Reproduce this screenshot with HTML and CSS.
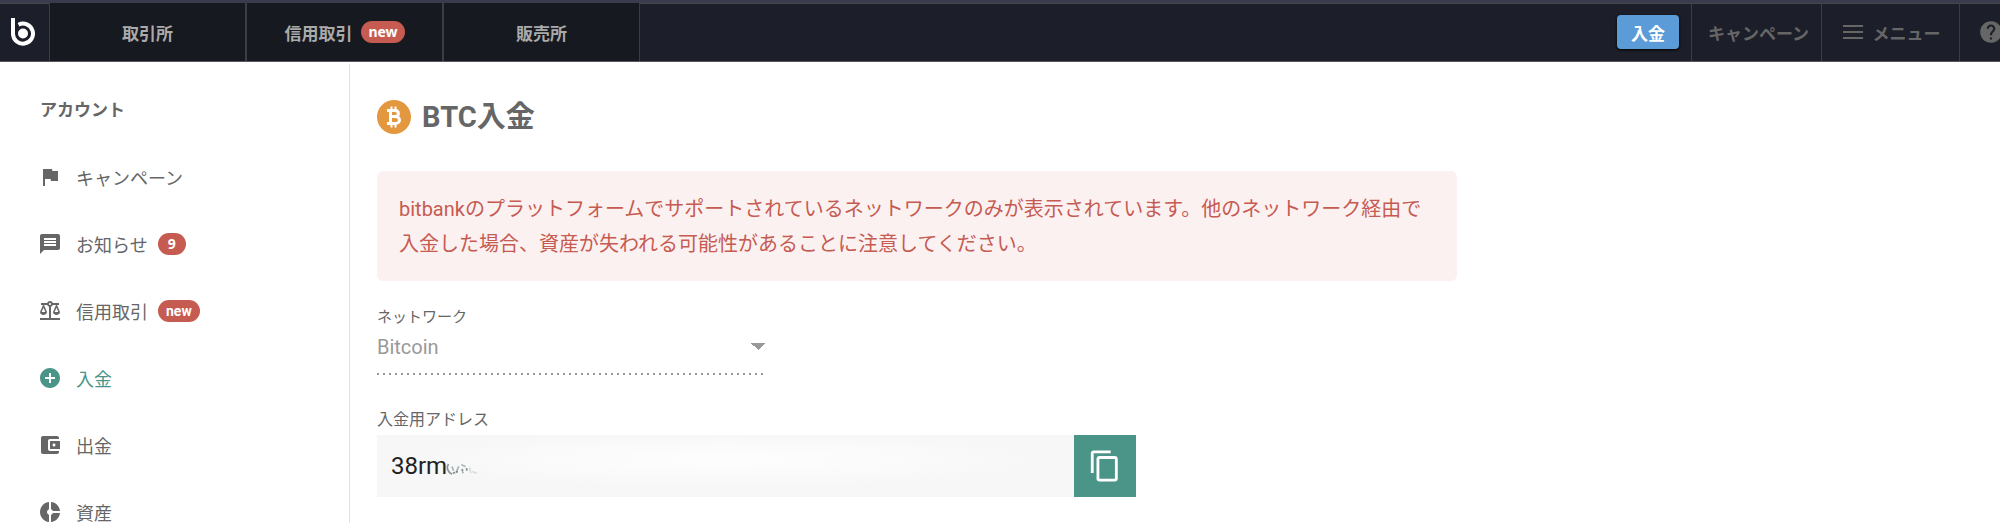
FILE: index.html
```html
<!DOCTYPE html>
<html lang="ja">

<head>
    <meta charset="UTF-8">
    <meta name="viewport" content="width=device-width, initial-scale=1.0">
    <title>BTC入金</title>
    <link rel="stylesheet" href="styles.css">
</head>

<body>
    <header class="topbar">
        <a href="#" class="logo" aria-label="bitbank">
            <svg width="26" height="32" viewBox="0 0 26 32">
                <path d="M3 2V17.500A10 10 0 1 0 8.500 8.700" fill="none" stroke="#fff" stroke-width="4"/>
                <circle cx="13" cy="17.500" r="5" fill="#fff"/>
            </svg>
        </a>
        <nav class="tabs">
            <a href="#" class="tab">取引所</a>
            <a href="#" class="tab">信用取引 <span class="badge">new</span></a>
            <a href="#" class="tab">販売所</a>
        </nav>
        <div class="tools">
            <div class="deposit"><button type="button" class="deposit-btn">入金</button></div>
            <a href="#" class="tool campaign">キャンペーン</a>
            <button type="button" class="tool menu">
                <svg width="20" height="14" viewBox="0 0 20 14" fill="#666"><path d="M0 0h20v2H0zM0 6h20v2H0zM0 12h20v2H0z"/></svg>
                メニュー
            </button>
            <a href="#" class="tool help" aria-label="ヘルプ">
                <svg width="26" height="26" viewBox="0 0 24 24" fill="#666"><path d="M12 2C6.480 2 2 6.480 2 12s4.480 10 10 10 10-4.480 10-10S17.520 2 12 2zm1 17h-2v-2h2v2zm2.070-7.750l-.9.920C13.450 12.900 13 13.500 13 15h-2v-.5c0-1.100.450-2.100 1.170-2.830l1.240-1.260c.370-.360.590-.860.590-1.410 0-1.100-.9-2-2-2s-2 .9-2 2H8c0-2.210 1.790-4 4-4s4 1.790 4 4c0 .880-.360 1.680-.930 2.250z"/></svg>
            </a>
        </div>
    </header>

    <div class="page">
        <aside class="sidebar">
            <h2>アカウント</h2>
            <ul>
                <li><a href="#">
                    <svg class="icon" viewBox="0 0 24 24"><path d="M14.400 6L14 4H5v17h2v-7h5.600l.4 2h7V6z"/></svg>
                    キャンペーン
                </a></li>
                <li><a href="#">
                    <svg class="icon" viewBox="0 0 24 24"><path d="M20 2H4c-1.100 0-1.990.9-1.990 2L2 22l4-4h14c1.100 0 2-.9 2-2V4c0-1.100-.9-2-2-2zm-2 12H6v-2h12v2zm0-3H6V9h12v2zm0-3H6V6h12v2z"/></svg>
                    お知らせ <span class="badge count">9</span>
                </a></li>
                <li><a href="#">
                    <svg class="icon" viewBox="0 0 24 24"><path d="M13 7.830c.850-.3 1.530-.980 1.830-1.830H18l-3 7c0 1.660 1.570 3 3.500 3s3.500-1.340 3.500-3l-3-7h2V4h-6.170c-.410-1.170-1.520-2-2.830-2s-2.420.830-2.830 2H3v2h2l-3 7c0 1.660 1.570 3 3.500 3S9 14.660 9 13L6 6h3.170c.3.850.980 1.530 1.830 1.830V19H2v2h20v-2h-9V7.830zM20.370 13h-3.740l1.870-4.360L20.370 13zm-13 0H3.630L5.500 8.640 7.370 13zM12 6c-.550 0-1-.450-1-1s.450-1 1-1 1 .450 1 1-.450 1-1 1z"/></svg>
                    信用取引 <span class="badge">new</span>
                </a></li>
                <li><a href="#" class="active">
                    <svg class="icon" viewBox="0 0 24 24"><path d="M12 2C6.480 2 2 6.480 2 12s4.480 10 10 10 10-4.480 10-10S17.520 2 12 2zm5 11h-4v4h-2v-4H7v-2h4V7h2v4h4v2z"/></svg>
                    入金
                </a></li>
                <li><a href="#">
                    <svg class="icon" viewBox="0 0 24 24"><path d="M21 18v1c0 1.100-.9 2-2 2H5c-1.110 0-2-.9-2-2V5c0-1.100.890-2 2-2h14c1.100 0 2 .9 2 2v1h-9c-1.110 0-2 .9-2 2v8c0 1.100.890 2 2 2h9zm-9-2h10V8H12v8zm4-2.500c-.830 0-1.500-.670-1.500-1.500s.670-1.500 1.500-1.500 1.500.670 1.500 1.500-.670 1.500-1.500 1.500z"/></svg>
                    出金
                </a></li>
                <li><a href="#">
                    <svg class="icon" viewBox="0 0 24 24"><path d="M11 9.160V2c-5 .5-9 4.790-9 10s4 9.500 9 10v-7.160c-1-.410-2-1.520-2-2.840s1-2.430 2-2.840zM14.860 11H22c-.480-4.750-4-8.530-9-9v7.160c1 .3 1.520.980 1.860 1.840zM13 14.840V22c5-.470 8.520-4.250 9-9h-7.140c-.340.860-.860 1.540-1.860 1.840z"/></svg>
                    資産
                </a></li>
            </ul>
        </aside>

        <main class="content">
            <h1>
                <svg width="34" height="34" viewBox="0 0 34 34">
                    <circle cx="17" cy="17" r="17" fill="#e3973e"/>
                    <path d="M10 10.500H18C22.500 10.500 22.500 16.500 18 16.500H14M18 16.500C24 16.500 24 23.500 18 23.500H10M13.500 10V24" fill="none" stroke="#fff" stroke-width="3"/>
                    <path d="M14.500 6.500V10M18.500 6.500V10M14.500 24V27.500M18.500 24V27.500" fill="none" stroke="#fff" stroke-width="2"/>
                </svg>
                BTC入金
            </h1>

            <p class="alert">bitbankのプラットフォームでサポートされているネットワークのみが表示されています。他のネットワーク経由で入金した場合、資産が失われる可能性があることに注意してください。</p>

            <div class="field network">
                <label for="network">ネットワーク</label>
                <select id="network" disabled>
                    <option>Bitcoin</option>
                </select>
            </div>

            <div class="field address">
                <label for="address">入金用アドレス</label>
                <div class="address-row">
                    <input type="text" id="address" value="38rm" readonly>
                    <!-- rest of the address is wiped out -->
                    <svg class="smudge" width="34" height="18" viewBox="0 0 40 18" fill="none">
                        <path d="M3 3C0 7 2 13 7 15" stroke="#8f9799" stroke-width="2"/>
                        <path d="M7 6L9 11M12 13L15 6M18 4L23 6" stroke="#aab5b8" stroke-width="2"/>
                        <path d="M8 14L14 12M19 9L20 14M24 8L25 12" stroke="#7f8a8d" stroke-width="2" stroke-dasharray="3 1"/>
                        <path d="M28 7L29 14M31 12L36 14" stroke="#d3dcde" stroke-width="2"/>
                    </svg>
                    <button type="button" class="copy-btn" aria-label="コピー">
                        <svg width="34" height="34" viewBox="0 0 24 24" fill="#fff"><path d="M16 1H4c-1.100 0-2 .9-2 2v14h2V3h12V1zm3 4H8c-1.100 0-2 .9-2 2v14c0 1.100.9 2 2 2h11c1.100 0 2-.9 2-2V7c0-1.100-.9-2-2-2zm0 16H8V7h11v14z"/></svg>
                    </button>
                </div>
            </div>
        </main>
    </div>
</body>

</html>
```

FILE: styles.css
```css
* {
    box-sizing: border-box;
}

body {
    margin: 0;
    font-family: Roboto, "Noto Sans CJK JP", sans-serif;
    font-size: 18px;
    color: #666;
    background-color: #fff;
    overflow-x: hidden;
}

/* no visible scrollbar next to the page */
html {
    scrollbar-width: none;
}

a {
    color: inherit;
    text-decoration: none;
}

button {
    font-family: inherit;
    cursor: pointer;
}

/* Top bar */
.topbar {
    display: flex;
    height: 62px;
    background-color: #1c1f29;
    border-top: 3px solid #3a3b4c;
    border-bottom: 1px solid #55555a;
    font-size: 17px;
    font-weight: bold;
    box-shadow: inset 0 1px #45464c;
}

.logo {
    display: flex;
    align-items: center;
    width: 49px;
    padding-left: 10px;
}

.tabs {
    display: flex;
    border-left: 1px solid #3b3d44;
}

.tab {
    display: flex;
    align-items: center;
    justify-content: center;
    gap: 9px;
    width: 197px;
    color: #aaa;
    background-color: #171920;
    border-right: 2px solid #3b3d44;
}

.tab:last-child {
    border-right-width: 1px;
    width: 196px;
}

.badge {
    padding: 0 8px;
    border-radius: 11px;
    background-color: #c65b51;
    color: #fff;
    font-size: 14px;
    font-weight: bold;
    line-height: 22px;
}

.tab .badge {
    padding: 0 7px;
    font-family: "Noto Sans", sans-serif;
}

.badge.count {
    padding: 0 10px;
    font-family: "Noto Sans", sans-serif;
}

.tools {
    display: flex;
    flex-shrink: 0;
    margin-left: auto;
    margin-right: -8px;
}

.deposit {
    display: flex;
    align-items: center;
    padding-right: 12px;
}

.deposit-btn {
    width: 62px;
    height: 34px;
    padding: 0;
    border: none;
    border-radius: 4px;
    background-color: #5b9bd8;
    color: #fff;
    font-size: 17px;
    font-weight: bold;
    box-shadow: 0 1px 3px #000;
}

.tool {
    display: flex;
    align-items: center;
    justify-content: center;
    gap: 10px;
    padding: 0;
    border: none;
    border-left: 1px solid #3b3d44;
    background: none;
    color: #666;
    font-size: 17px;
    font-weight: bold;
}

.campaign {
    width: 130px;
    padding-left: 4px;
}

.menu {
    width: 138px;
    padding-left: 2px;
}

.help {
    padding-left: 18px;
    padding-right: 4px;
}

/* Side menu */
.page {
    display: flex;
}

.sidebar {
    width: 350px;
    flex-shrink: 0;
    height: calc(100vh - 64px);
    padding: 25px 0 0 38px;
    margin-top: 2px;
    border-right: 1px solid #e2e2e2;
    overflow: hidden;
}

.sidebar h2 {
    margin: 0 0 12px 2px;
    font-size: 17px;
    line-height: 42px;
}

.sidebar ul {
    margin: 0;
    padding: 0;
    list-style: none;
}

.sidebar li a {
    display: flex;
    align-items: center;
    gap: 10px;
    height: 67px;
}

.sidebar li a.active {
    color: #4b9588;
}

.icon {
    width: 24px;
    height: 24px;
    margin-right: 4px;
    fill: currentColor;
}

/* Deposit form */
.content {
    flex: 1;
    max-width: 1107px;
    padding: 33px 0 0 27px;
}

h1 {
    display: flex;
    align-items: center;
    gap: 11px;
    margin: 0 0 32px;
    font-size: 29px;
    line-height: 44px;
}

.alert {
    margin: 0 0 25px;
    padding: 21px 22px 19px;
    border-radius: 6px;
    background-color: #fcf1f1;
    color: #c65b51;
    font-size: 20px;
    line-height: 35px;
}

.field {
    display: flex;
    flex-direction: column;
}

.field label {
    font-size: 15px;
    line-height: 22px;
    color: #666;
}

.network {
    width: 390px;
    margin-bottom: 34px;
}

.network select {
    height: 47px;
    padding: 0 0 9px;
    border: none;
    appearance: none;
    background:
        conic-gradient(from -45deg at 50% 100%, #999 90deg, transparent 0) right 2px top 15px / 14px 7px no-repeat,
        repeating-linear-gradient(to right, #999 0 2px, transparent 2px 6px) left bottom / 100% 2px no-repeat;
    color: #999;
    font-family: inherit;
    font-size: 20px;
    opacity: 1;
}

.address {
    width: 759px;
}

.address label {
    font-size: 16px;
}

.address-row {
    position: relative;
    display: flex;
    height: 62px;
    margin-top: 4px;
}

.address-row input {
    flex: 1;
    padding: 0 14px;
    border: none;
    background: radial-gradient(ellipse 320px 28px at 50% 40%, #fefefe, #f7f7f7);
    color: #222;
    font-family: inherit;
    font-size: 24px;
}

.smudge {
    position: absolute;
    left: 69px;
    top: 25px;
}

.copy-btn {
    display: flex;
    align-items: center;
    justify-content: center;
    width: 62px;
    padding: 0;
    border: none;
    background-color: #4b9588;
}
```
